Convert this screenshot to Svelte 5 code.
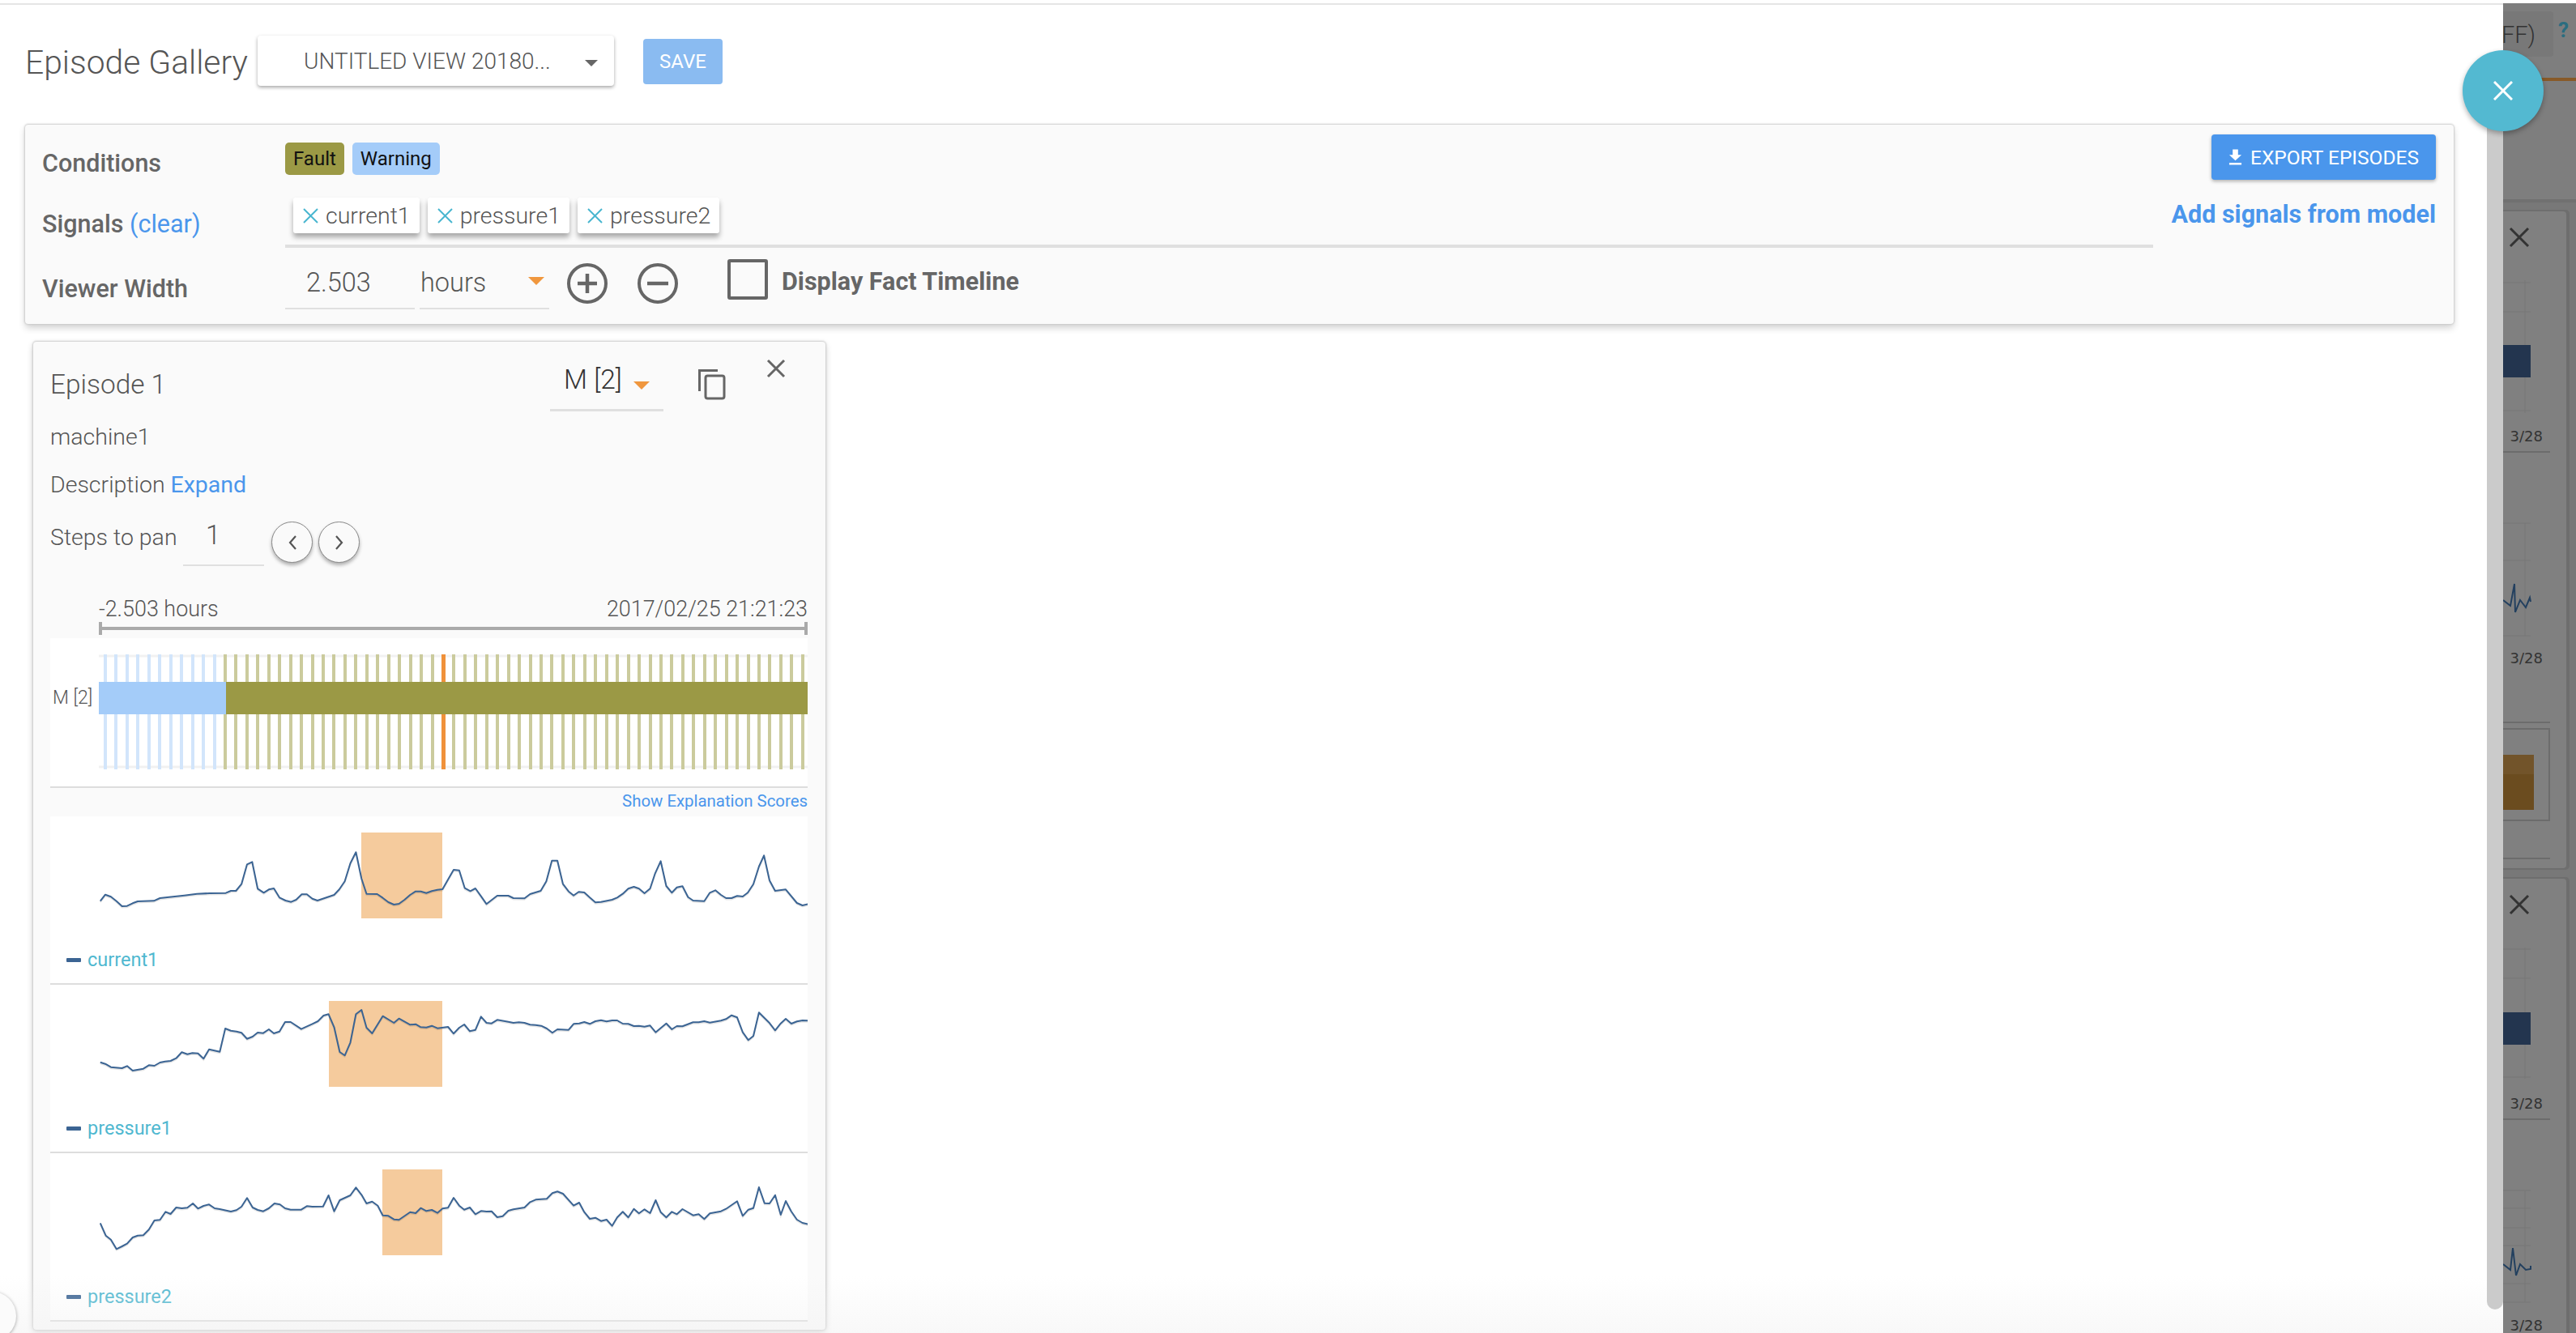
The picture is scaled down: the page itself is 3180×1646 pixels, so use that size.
<script>
  const raw1 = "134,398 144,374 155,382 166,398 177,417 187,416 198,406 208,399 240,397 252,387 270,383 300,377 325,371 350,369 382,368 392,360 402,360 413,335 424,262 434,253 445,352 457,367 467,355 477,351 488,385 500,396 511,401 521,393 532,373 542,373 553,389 563,396 596,375 606,355 617,325 628,258 639,217 650,315 660,371 681,372 692,386 703,402 714,411 724,408 735,393 746,375 757,362 767,362 778,368 789,361 800,356 810,354 821,318 832,282 843,284 854,350 865,361 875,351 886,380 897,409 918,378 940,378 950,387 972,388 983,372 1004,360 1015,325 1026,248 1037,248 1048,335 1059,362 1069,377 1079,364 1090,366 1101,385 1112,403 1123,401 1145,393 1155,385 1166,371 1177,352 1188,345 1198,352 1209,369 1220,352 1230,295 1241,250 1252,342 1263,367 1273,347 1284,343 1295,383 1305,396 1327,398 1338,367 1349,358 1360,375 1370,387 1381,387 1392,379 1403,381 1413,367 1424,335 1435,270 1445,229 1456,322 1467,360 1488,355 1510,405 1521,414 1532,409";
  const raw2 = "134,335 144,341 155,353 177,357 187,349 198,366 219,359 230,346 241,348 252,336 262,332 273,330 284,320 295,298 306,305 316,301 327,302 338,322 349,287 370,296 381,210 392,218 403,221 413,226 424,248 435,240 445,225 456,227 467,213 477,228 488,221 499,186 510,186 531,212 553,193 564,183 575,162 585,157 596,205 607,297 617,310 628,262 639,157 650,141 660,207 671,228 692,164 714,189 724,173 746,196 757,194 767,205 778,206 789,200 800,209 821,204 832,229 843,207 853,195 864,220 875,215 886,166 897,189 907,191 918,178 940,185 950,189 961,187 972,189 983,196 994,197 1005,200 1016,210 1027,226 1037,213 1059,215 1069,193 1080,191 1090,186 1101,193 1112,183 1123,179 1134,184 1145,180 1155,180 1166,192 1177,193 1188,201 1198,200 1209,203 1220,199 1231,224 1252,191 1263,213 1273,201 1284,202 1305,187 1316,187 1327,183 1338,188 1360,181 1370,175 1381,161 1392,169 1403,224 1414,253 1424,238 1435,151 1456,190 1467,217 1478,191 1488,174 1499,192 1510,184 1521,180 1532,181";
  const raw3 = "134,931 145,977 155,992 166,1027 177,1017 187,1007 198,984 208,977 219,976 230,955 241,921 252,919 263,889 273,897 284,873 295,876 306,874 317,858 327,877 338,867 349,862 360,876 370,879 392,888 403,883 413,870 424,838 435,873 445,882 456,887 467,876 478,858 489,862 499,876 510,881 531,881 542,868 553,870 574,869 585,828 596,887 607,846 628,828 639,799 650,826 660,858 671,851 682,866 692,902 703,904 714,917 724,919 746,890 757,894 767,875 778,886 789,882 800,893 810,877 821,874 832,837 843,866 853,881 864,873 875,898 886,886 897,888 907,887 918,909 929,905 940,885 950,880 972,873 983,853 994,844 1016,841 1027,820 1037,814 1048,822 1069,866 1080,855 1090,890 1101,915 1112,911 1123,923 1134,918 1145,941 1155,910 1166,889 1177,910 1188,878 1198,895 1209,880 1220,894 1231,846 1241,890 1252,910 1263,889 1273,898 1284,879 1305,902 1316,898 1327,916 1338,895 1360,887 1370,878 1392,850 1403,904 1414,881 1424,875 1435,798 1446,857 1456,858 1467,827 1478,900 1488,849 1499,888 1510,918 1521,930 1532,935";

  const toPts = (raw, yBase) =>
    raw.split(" ").map((p) => {
      const [x, y] = p.split(",").map(Number);
      return `${(x / 1.6 + 40).toFixed(1)},${(y / 3 + yBase).toFixed(1)}`;
    }).join(" ");

  const charts = [
    { name: "current1", top: 1008, pts: toPts(raw1, 980), bx: 446, bw: 100 },
    { name: "pressure1", top: 1216, pts: toPts(raw2, 1200), bx: 406, bw: 140 },
    { name: "pressure2", top: 1424, pts: toPts(raw3, 1200), bx: 472, bw: 74 }
  ];

  const stripes = Array.from({ length: 65 }, (_, i) => {
    const x = Math.round(128 + 13.45 * i);
    return { x, fill: i === 31 ? "#f0913a" : i < 11 ? "#d2e5fb" : "#cbcb9d", w: i === 31 ? 5 : 4 };
  });

  const signals = ["current1", "pressure1", "pressure2"];
</script>

<div class="page">
  <main class="drawer">
    <header class="head">
      <h1 class="title">Episode Gallery</h1>
      <div class="view-select">
        <span>UNTITLED VIEW 20180...</span>
        <i class="caret grey"></i>
      </div>
      <button class="save">SAVE</button>
    </header>

    <section class="panel">
      <div class="row row1">
        <div class="label">Conditions</div>
        <div class="tags">
          <span class="tag fault">Fault</span>
          <span class="tag warning">Warning</span>
        </div>
        <button class="export">
          <svg width="17" height="20" viewBox="0 0 18 20"><path d="M5.500 0h7v7h4.500L9 14.500 1 7h4.500zM1 17.500h16V20H1z" fill="#fff"/></svg>
          EXPORT EPISODES
        </button>
      </div>

      <div class="row row2">
        <div class="label">Signals <span class="link">(clear)</span></div>
        <div class="signals">
          {#each signals as s}
            <span class="chip">
              <svg width="19" height="19" viewBox="0 0 19 19"><path d="M1 1l17 17M18 1L1 18" stroke="#49b6d0" stroke-width="2" fill="none"/></svg>
              {s}
            </span>
          {/each}
        </div>
        <div class="add">Add signals from model</div>
      </div>

      <div class="row row3">
        <div class="label">Viewer Width</div>
        <div class="field num">2.503</div>
        <div class="field unit">hours<i class="caret orange"></i></div>
        <svg class="round" width="50" height="50" viewBox="0 0 50 50"><circle cx="25" cy="25" r="23" stroke="#666" stroke-width="4" fill="none"/><path d="M25 13v24M13 25h24" stroke="#666" stroke-width="4.500"/></svg>
        <svg class="round minus" width="50" height="50" viewBox="0 0 50 50"><circle cx="25" cy="25" r="23" stroke="#666" stroke-width="4" fill="none"/><path d="M12 25h26" stroke="#666" stroke-width="4.500"/></svg>
        <div class="check"></div>
        <div class="check-label">Display Fact Timeline</div>
      </div>
    </section>

    <article class="card">
      <div class="card-head">
        <div class="ep">Episode 1</div>
        <div class="m-select">M [2]<i class="caret orange small"></i></div>
        <svg class="copy" width="34" height="38" viewBox="0 0 34 38"><path d="M1.500 27V1.500H24" stroke="#666" stroke-width="3" fill="none"/><rect x="9" y="8" width="23" height="28" rx="2.500" stroke="#666" stroke-width="3" fill="none"/></svg>
        <svg class="close" width="24" height="24" viewBox="0 0 24 24"><path d="M2 2l20 20M22 2L2 22" stroke="#666" stroke-width="3" fill="none"/></svg>
      </div>
      <div class="line machine">machine1</div>
      <div class="line desc">Description <span class="link">Expand</span></div>
      <div class="line steps">
        <span>Steps to pan</span>
        <div class="pan-input">1</div>
        <button class="pan">
          <svg width="12" height="20" viewBox="0 0 12 20"><path d="M10 2L3 10l7 8" stroke="#555" stroke-width="2.200" fill="none"/></svg>
        </button>
        <button class="pan">
          <svg width="12" height="20" viewBox="0 0 12 20"><path d="M2 2l7 8-7 8" stroke="#555" stroke-width="2.200" fill="none"/></svg>
        </button>
      </div>

      <div class="axis-labels">
        <span>-2.503 hours</span>
        <span>2017/02/25 21:21:23</span>
      </div>
      <div class="axis"></div>

      <svg class="timeline" width="935" height="183" viewBox="62 788 935 183">
        <path d="M122 810H997M122 947H997" stroke="#f1f1f1" stroke-width="3"/>
        {#each stripes as s}
          <rect x={s.x} y="808" width={s.w} height="142" fill={s.fill} />
        {/each}
        <rect x="122" y="842" width="157" height="40" fill="#a4ccf9" />
        <rect x="279" y="842" width="718" height="40" fill="#9b9945" />
        <text x="65" y="869" class="m-label">M [2]</text>
      </svg>

      <div class="explain">Show Explanation Scores</div>

      {#each charts as c}
        <div class="chart">
          <svg width="935" height="155" viewBox="62 {c.top} 935 155">
            <rect x={c.bx} y={c.top + 20} width={c.bw} height="106" fill="#f5cb9d" />
            <polyline points={c.pts} transform="translate(0 1.500)" fill="none" stroke="#000" stroke-opacity="0.100" stroke-width="2" />
            <polyline points={c.pts} fill="none" stroke="#3b6493" stroke-width="2" stroke-linejoin="round" />
          </svg>
          <div class="legend"><i class="swatch"></i>{c.name}</div>
        </div>
      {/each}
    </article>
  </main>

  <aside class="backdrop">
    <svg width="90" height="1642" viewBox="3090 4 90 1642">
      <rect x="3090" y="4" width="90" height="1642" fill="#7e7e7e" />
      <rect x="3080" y="14" width="72" height="56" rx="4" fill="#787878" />
      <text x="3130" y="53" text-anchor="end" class="bd-off">OFF)</text>
      <text x="3158" y="46" class="bd-q">?</text>
      <rect x="3090" y="96" width="90" height="4" fill="#885a28" />
      <rect x="3090" y="246" width="90" height="1400" fill="#787878" />
      <rect x="3090" y="246" width="90" height="4" fill="#707070" />

      <rect x="3080" y="259" width="92" height="815" rx="5" fill="#6e6e6e" />
      <rect x="3080" y="261" width="88" height="811" rx="4" fill="#808080" />
      <rect x="3080" y="1083" width="92" height="600" rx="5" fill="#6e6e6e" />
      <rect x="3080" y="1085" width="88" height="600" rx="4" fill="#808080" />

      <path d="M3099 282l22 22M3121 282l-22 22M3099 1106l22 22M3121 1106l-22 22" stroke="#333" stroke-width="3" fill="none" />

      <path d="M3090 349H3124M3090 385H3124M3090 507H3124M3117 346V510M3090 646H3124M3090 692H3124M3090 785H3124M3117 646V785" stroke="#797979" stroke-width="1.500" fill="none" />
      <rect x="3090" y="426" width="34" height="40" fill="#23354f" />
      <text x="3139" y="545" text-anchor="end" class="bd-date">3/28</text>
      <path d="M3090 558H3148" stroke="#6c6c6c" stroke-width="2" />
      <polyline points="3090,741 3099,748 3104,721 3105,756 3111,741 3118,750 3123,738 3124,743" fill="none" stroke="#23405f" stroke-width="2" />
      <text x="3139" y="819" text-anchor="end" class="bd-date">3/28</text>
      <path d="M3090 892H3148" stroke="#6c6c6c" stroke-width="2" />
      <path d="M3090 900H3147V1013H3090" stroke="#6c6c6c" stroke-width="2" fill="none" />
      <rect x="3090" y="932" width="38" height="24" fill="#72542a" />
      <rect x="3090" y="956" width="38" height="44" fill="#6b4c1f" />
      <path d="M3090 1060H3148" stroke="#6c6c6c" stroke-width="2" />

      <path d="M3090 1172H3124M3090 1208H3124M3090 1330H3124M3117 1170V1332M3090 1470H3124M3090 1492H3124M3090 1516H3124M3090 1538H3124M3090 1585H3124M3090 1608H3124M3117 1470V1608" stroke="#797979" stroke-width="1.500" fill="none" />
      <rect x="3090" y="1250" width="34" height="40" fill="#23354f" />
      <text x="3139" y="1369" text-anchor="end" class="bd-date">3/28</text>
      <path d="M3090 1382H3148" stroke="#6c6c6c" stroke-width="2" />
      <polyline points="3090,1561 3099,1568 3102,1541 3106,1575 3111,1561 3118,1568 3124,1567 3124,1563" fill="none" stroke="#23405f" stroke-width="2" />
      <text x="3139" y="1643" text-anchor="end" class="bd-date">3/28</text>
    </svg>
  </aside>

  <div class="fade"></div>
  <div class="corner"></div>
  <div class="scrollbar"></div>
  <button class="fab" aria-label="Close">
    <svg width="24" height="24" viewBox="0 0 24 24"><path d="M1 1l22 22M23 1L1 23" stroke="#fff" stroke-width="3" fill="none"/></svg>
  </button>
</div>

<style>
  :global(body) {
    margin: 0;
    background: #fff;
  }
  .page {
    position: relative;
    display: flex;
    width: 3180px;
    height: 1646px;
    padding-top: 4px;
    box-sizing: border-box;
    overflow: hidden;
    font-family: Roboto, "Liberation Sans", sans-serif;
    color: #666;
    background: #fff;
  }
  .drawer {
    width: 3090px;
    flex: none;
    box-sizing: border-box;
    border-top: 2px solid #e5e5e5;
    padding-left: 31px;
    background: #fff;
  }
  .backdrop {
    flex: 1;
    height: 1642px;
  }
  .backdrop svg {
    display: block;
  }
  .bd-off {
    font: 300 29px Roboto, sans-serif;
    fill: #333;
  }
  .bd-q {
    font: 700 26px Roboto, sans-serif;
    fill: #2a6d80;
  }
  .bd-date {
    font: 18px "DejaVu Sans", sans-serif;
    fill: #333;
  }

  .head {
    display: flex;
    align-items: flex-start;
    height: 148px;
  }
  .title {
    margin: 50px 0 0;
    width: 287px;
    font-weight: 300;
    font-size: 40.800px;
    line-height: 42px;
    color: #555;
    white-space: nowrap;
  }
  .view-select {
    display: flex;
    align-items: center;
    position: relative;
    margin-top: 38px;
    width: 440px;
    height: 62px;
    box-sizing: border-box;
    padding-left: 57px;
    border-radius: 4px;
    background: #fff;
    box-shadow: 0 2px 4px rgba(0, 0, 0, 0.35);
    font-weight: 300;
    font-size: 28px;
    color: #555;
    white-space: nowrap;
  }
  .caret {
    display: inline-block;
    width: 0;
    height: 0;
    border-style: solid;
    border-color: transparent;
    border-bottom-width: 0;
  }
  .caret.grey {
    position: absolute;
    right: 20px;
    top: 30px;
    border-width: 8px 8px 0;
    border-top-color: #666;
  }
  .caret.orange {
    border-width: 10px 10px 0;
    border-top-color: #f0973e;
  }
  .save {
    margin: 42px 0 0 36px;
    width: 98px;
    height: 56px;
    padding: 0;
    border: 0;
    border-radius: 4px;
    background: #8abbf1;
    color: #fff;
    font: 400 24px Roboto, sans-serif;
  }

  .panel {
    width: 2998px;
    height: 246px;
    box-sizing: border-box;
    padding: 12px 22px 0 21px;
    border-radius: 4px;
    background: #fafafa;
    box-shadow: 0 0 2px 1px #ccc, 0 5px 8px rgba(0, 0, 0, 0.18);
  }
  .row {
    display: flex;
    align-items: flex-start;
  }
  .label {
    width: 300px;
    flex: none;
    font-weight: 500;
    font-size: 30.500px;
    line-height: 36px;
    color: #666;
  }
  .link {
    color: #4a96ec;
    font-weight: 400;
  }
  .row1 {
    height: 70px;
  }
  .row1 .label {
    padding-top: 18px;
  }
  .tags {
    display: flex;
    gap: 10px;
    flex: 1;
    padding-top: 10px;
  }
  .tag {
    height: 40px;
    box-sizing: border-box;
    padding: 0 10px;
    border-radius: 5px;
    font-size: 24px;
    line-height: 40px;
    color: #111;
  }
  .fault {
    background: #9b9945;
  }
  .warning {
    background: #a4ccf9;
  }
  .export {
    display: flex;
    align-items: center;
    justify-content: center;
    gap: 10px;
    width: 277px;
    height: 56px;
    padding: 0;
    border: 0;
    border-radius: 4px;
    background: #4a96ec;
    color: #fff;
    font: 400 24.500px Roboto, sans-serif;
    box-shadow: 0 2px 4px rgba(0, 0, 0, 0.3);
  }
  .row2 {
    height: 74px;
  }
  .row2 .label {
    padding-top: 23px;
  }
  .signals {
    display: flex;
    gap: 10px;
    width: 2306px;
    flex: none;
    height: 70px;
    box-sizing: border-box;
    padding: 8px 0 0 10px;
    border-bottom: 4px solid #e0e0e0;
  }
  .chip {
    display: flex;
    align-items: center;
    gap: 9px;
    height: 44px;
    box-sizing: border-box;
    padding: 0 11px 0 12px;
    border-radius: 3px;
    background: #fff;
    font-weight: 300;
    font-size: 28.500px;
    color: #555;
    box-shadow: 0 5px 6px rgba(0, 0, 0, 0.33);
  }
  .add {
    flex: 1;
    padding-top: 10px;
    text-align: right;
    font-weight: 700;
    font-size: 30.500px;
    line-height: 38px;
    color: #4a96ec;
    white-space: nowrap;
  }
  .row3 .label {
    padding-top: 29px;
  }
  .field {
    box-sizing: border-box;
    height: 72px;
    padding-top: 20px;
    border-bottom: 2px solid #e0e0e0;
    font-weight: 300;
    font-size: 32.500px;
    line-height: 38px;
    color: #555;
  }
  .num {
    width: 160px;
    padding-left: 26px;
    margin-right: 6px;
  }
  .unit {
    position: relative;
    width: 160px;
    padding-left: 1px;
  }
  .unit .caret {
    position: absolute;
    right: 6px;
    top: 32px;
  }
  .round {
    margin: 15px 0 0 22px;
    flex: none;
  }
  .round.minus {
    margin-left: 37px;
  }
  .check {
    margin: 10px 0 0 61px;
    width: 50px;
    height: 50px;
    box-sizing: border-box;
    border: 4px solid #666;
    border-radius: 3px;
  }
  .check-label {
    margin: 16px 0 0 17px;
    font-weight: 700;
    font-size: 30.500px;
    line-height: 44px;
    color: #666;
    white-space: nowrap;
  }

  .card {
    position: relative;
    width: 978px;
    height: 1220px;
    box-sizing: border-box;
    margin: 22px 0 0 10px;
    padding: 0 22px 0 21px;
    border-radius: 4px;
    background: #fafafa;
    box-shadow: 0 0 2px 1px #ccc, 0 3px 8px rgba(0, 0, 0, 0.2);
  }
  .card-head {
    display: flex;
    align-items: flex-start;
    height: 89px;
  }
  .ep {
    flex: 1;
    padding-top: 34px;
    font-weight: 300;
    font-size: 33.400px;
    line-height: 38px;
    color: #555;
  }
  .m-select {
    width: 140px;
    height: 86px;
    box-sizing: border-box;
    padding: 28px 0 0 17px;
    border-bottom: 3px solid #e0e0e0;
    font-weight: 300;
    font-size: 33.500px;
    line-height: 38px;
    color: #333;
  }
  .caret.small {
    margin-left: 14px;
    vertical-align: -1px;
  }
  .copy {
    margin: 34px 0 0 43px;
  }
  .close {
    margin: 21px 27px 0 50px;
  }
  .line {
    font-weight: 300;
    font-size: 28.500px;
    color: #555;
  }
  .machine {
    height: 54px;
    line-height: 57px;
  }
  .desc {
    height: 66px;
    line-height: 68px;
  }
  .steps {
    display: flex;
    align-items: flex-start;
    height: 68px;
    line-height: 66px;
  }
  .steps span {
    width: 164px;
    flex: none;
  }
  .pan-input {
    width: 100px;
    height: 66px;
    box-sizing: content-box;
    border-bottom: 2px solid #e0e0e0;
    text-indent: 28px;
    font-size: 33px;
    line-height: 60px;
    margin-right: 9px;
  }
  .pan {
    display: flex;
    align-items: center;
    justify-content: center;
    width: 51px;
    height: 51px;
    margin: 13px 7px 0 0;
    padding: 0;
    border: 1px solid #888;
    border-radius: 50%;
    background: #fafafa;
    box-shadow: 0 3px 4px rgba(0, 0, 0, 0.3);
  }
  .axis-labels {
    display: flex;
    justify-content: space-between;
    margin-left: 60px;
    padding-top: 37px;
    font-weight: 300;
    font-size: 26.900px;
    line-height: 32px;
    color: #555;
  }
  .axis {
    margin-left: 60px;
    height: 16px;
    box-sizing: border-box;
    border-left: 4px solid #aaa;
    border-right: 4px solid #aaa;
    background: linear-gradient(#aaa, #aaa) center / 100% 4px no-repeat;
    margin-bottom: 4px;
  }
  .timeline {
    display: block;
    background: #fff;
    border-bottom: 2px solid #ddd;
  }
  .m-label {
    font: 300 23px Roboto, sans-serif;
    fill: #555;
  }
  .explain {
    height: 35px;
    text-align: right;
    font-size: 20.400px;
    font-weight: 400;
    line-height: 33px;
    color: #4a96ec;
  }
  .chart {
    height: 206px;
    background: #fff;
    border-bottom: 2px solid #ddd;
  }
  .chart svg {
    display: block;
  }
  .legend {
    display: flex;
    align-items: center;
    height: 44px;
    padding-left: 20px;
    font-weight: 400;
    font-size: 23.500px;
    color: #4fb8d0;
  }
  .swatch {
    width: 18px;
    height: 5px;
    margin-right: 8px;
    border-radius: 1px;
    background: #3b6493;
  }

  .fade {
    position: absolute;
    left: 0;
    bottom: 0;
    width: 3090px;
    height: 70px;
    background: linear-gradient(rgba(245, 245, 245, 0), rgba(240, 240, 240, 0.45));
  }
  .corner {
    position: absolute;
    left: -40px;
    top: 1595px;
    width: 60px;
    height: 60px;
    border-radius: 50%;
    background: #fbfbfb;
    box-shadow: 0 1px 4px rgba(0, 0, 0, 0.35);
  }
  .scrollbar {
    position: absolute;
    left: 3070px;
    top: 70px;
    width: 20px;
    height: 1547px;
    border-radius: 0 0 10px 10px;
    background: #cbcbcb;
  }
  .fab {
    position: absolute;
    left: 3040px;
    top: 62px;
    display: flex;
    align-items: center;
    justify-content: center;
    width: 100px;
    height: 100px;
    padding: 0;
    border: 0;
    border-radius: 50%;
    background: #53b9d1;
    box-shadow: 0 3px 6px rgba(0, 0, 0, 0.3);
  }
</style>
